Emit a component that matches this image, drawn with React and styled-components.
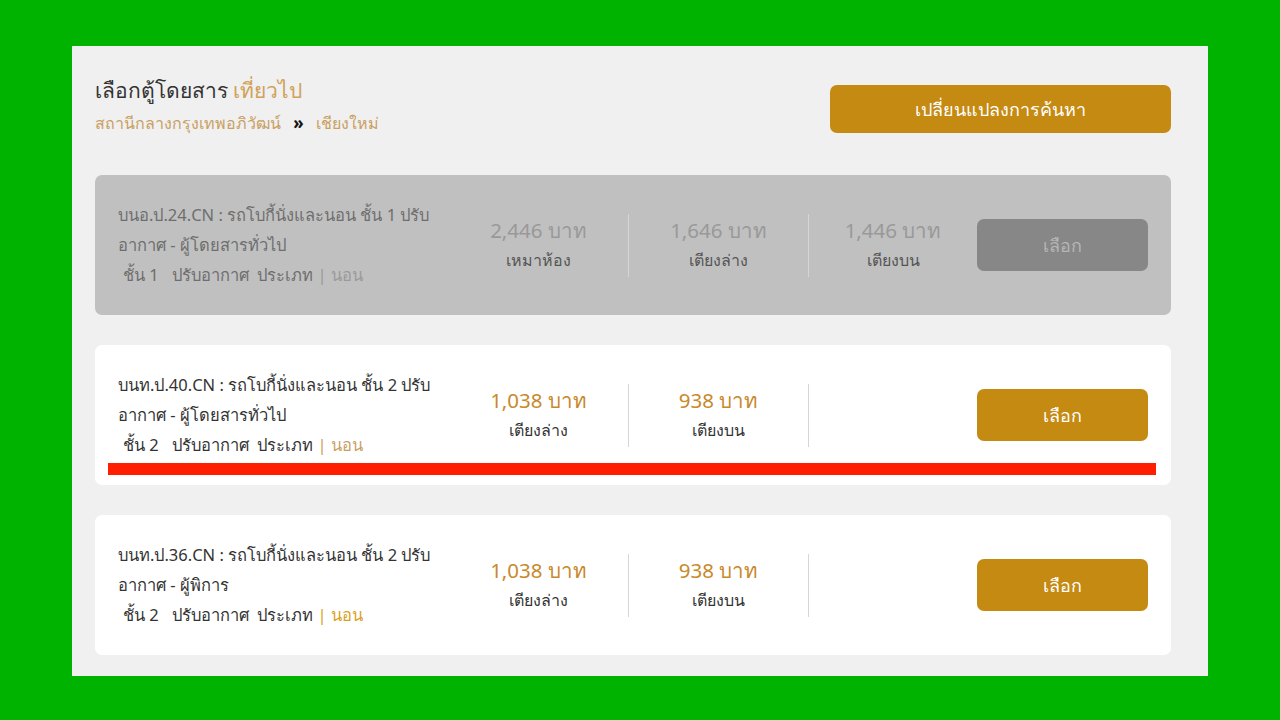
import { styled, createGlobalStyle } from 'styled-components'

const GlobalStyle = createGlobalStyle`
  html, body {
    margin: 0;
    padding: 0;
    background: #00b300;
  }
  body {
    font-family: Tahoma, "Noto Sans", "Liberation Sans", sans-serif;
  }
`

const trains = [
  {
    id: 'a',
    name: 'บนอ.ป.24.CN : รถโบกี้นั่งและนอน ชั้น 1 ปรับ',
    name2: 'อากาศ - ผู้โดยสารทั่วไป',
    cls: 'ชั้น 1',
    disabled: true,
    prices: [
      { price: '2,446 บาท', label: 'เหมาห้อง' },
      { price: '1,646 บาท', label: 'เตียงล่าง' },
      { price: '1,446 บาท', label: 'เตียงบน' },
    ],
  },
  {
    id: 'b',
    name: 'บนท.ป.40.CN : รถโบกี้นั่งและนอน ชั้น 2 ปรับ',
    name2: 'อากาศ - ผู้โดยสารทั่วไป',
    cls: 'ชั้น 2',
    marked: true,
    typeColor: '#c9a063',
    prices: [
      { price: '1,038 บาท', label: 'เตียงล่าง' },
      { price: '938 บาท', label: 'เตียงบน' },
      null,
    ],
  },
  {
    id: 'c',
    name: 'บนท.ป.36.CN : รถโบกี้นั่งและนอน ชั้น 2 ปรับ',
    name2: 'อากาศ - ผู้พิการ',
    cls: 'ชั้น 2',
    typeColor: '#d9a21c',
    prices: [
      { price: '1,038 บาท', label: 'เตียงล่าง' },
      { price: '938 บาท', label: 'เตียงบน' },
      null,
    ],
  },
]

function App() {
  return (
    <Page>
      <GlobalStyle />
      <Panel>
        <Header>
          <div>
            <Title>
              เลือกตู้โดยสาร <Gold>เที่ยวไป</Gold>
            </Title>
            <Route>
              สถานีกลางกรุงเทพอภิวัฒน์ <Arrow>»</Arrow> เชียงใหม่
            </Route>
          </div>
          <ChangeButton>เปลี่ยนแปลงการค้นหา</ChangeButton>
        </Header>

        {trains.map((t) => (
          <Card key={t.id} $disabled={t.disabled}>
            <Info $disabled={t.disabled}>
              <div>{t.name}</div>
              <div>{t.name2}</div>
              <ClassLine>
                {t.cls}&nbsp;&nbsp; ปรับอากาศ&nbsp; ประเภท{' '}
                <Type $color={t.disabled ? '#9a9a9a' : t.typeColor}>| นอน</Type>
              </ClassLine>
            </Info>
            {t.prices.map((p, i) => (
              <PriceCol key={i} $last={i === 2}>
                {p && (
                  <>
                    <Price $disabled={t.disabled}>{p.price}</Price>
                    <PriceLabel $disabled={t.disabled}>{p.label}</PriceLabel>
                  </>
                )}
              </PriceCol>
            ))}
            <SelectButton $disabled={t.disabled}>เลือก</SelectButton>
            {t.marked && <Marker />}
          </Card>
        ))}
      </Panel>
    </Page>
  )
}

export default App

const Page = styled.div`
  width: 1280px;
  height: 720px;
  padding: 46px 72px 0;
  box-sizing: border-box;
`
const Panel = styled.div`
  background: #f0f0f0;
  height: 630px;
  box-sizing: border-box;
  padding: 28px 37px 0 23px;
  display: flex;
  flex-direction: column;
  gap: 30px;
`
const Header = styled.div`
  display: flex;
  justify-content: space-between;
  align-items: flex-start;
  height: 71px;
  margin-bottom: -1px;
`
const Title = styled.div`
  font-size: 21px;
  color: #333;
  line-height: 32px;
`
const Gold = styled.span`
  color: #d0a158;
`
const Route = styled.div`
  font-size: 16px;
  color: #c9a063;
  margin-top: 5px;
`
const Arrow = styled.span`
  color: #111;
  font-weight: bold;
  margin: 0 8px;
  font-size: 17px;
`
const ChangeButton = styled.button`
  margin-top: 11px;
  width: 341px;
  height: 48px;
  border: none;
  border-radius: 7px;
  background: #c58a12;
  color: #fff;
  font-family: inherit;
  font-size: 18px;
`
const Card = styled.div`
  position: relative;
  flex-shrink: 0;
  height: 140px;
  margin-top: ${(p) => (p.$disabled ? '1px' : '0')};
  border-radius: 7px;
  background: ${(p) => (p.$disabled ? '#c0c0c0' : '#fff')};
  display: flex;
  align-items: center;
  padding: 0 23px;
  box-sizing: border-box;
`
const Info = styled.div`
  flex-shrink: 0;
  width: 331px;
  font-size: 16.5px;
  line-height: 30px;
  white-space: nowrap;
  color: ${(p) => (p.$disabled ? '#6e6e6e' : '#333')};
`
const ClassLine = styled.div`
  padding-left: 5px;
`
const Type = styled.span`
  color: ${(p) => p.$color};
`
const PriceCol = styled.div`
  flex-shrink: 0;
  width: ${(p) => (p.$last ? '168px' : '180px')};
  height: 63px;
  display: flex;
  flex-direction: column;
  align-items: center;
  justify-content: center;
  border-right: ${(p) => (p.$last ? 'none' : '1px solid #d6d6d6')};
  box-sizing: border-box;
`
const Price = styled.div`
  font-size: 20.5px;
  line-height: 30px;
  color: ${(p) => (p.$disabled ? '#999' : '#c8892a')};
`
const PriceLabel = styled.div`
  font-size: 16px;
  line-height: 30px;
  color: ${(p) => (p.$disabled ? '#555' : '#333')};
`
const SelectButton = styled.button`
  flex-shrink: 0;
  margin-left: auto;
  width: 171px;
  height: 52px;
  border: none;
  border-radius: 7px;
  background: ${(p) => (p.$disabled ? '#878787' : '#c58a12')};
  color: ${(p) => (p.$disabled ? '#b5b5b5' : '#fff')};
  font-family: inherit;
  font-size: 18px;
`
const Marker = styled.div`
  position: absolute;
  left: 13px;
  right: 15px;
  bottom: 10px;
  height: 12px;
  background: #ff1e00;
`
